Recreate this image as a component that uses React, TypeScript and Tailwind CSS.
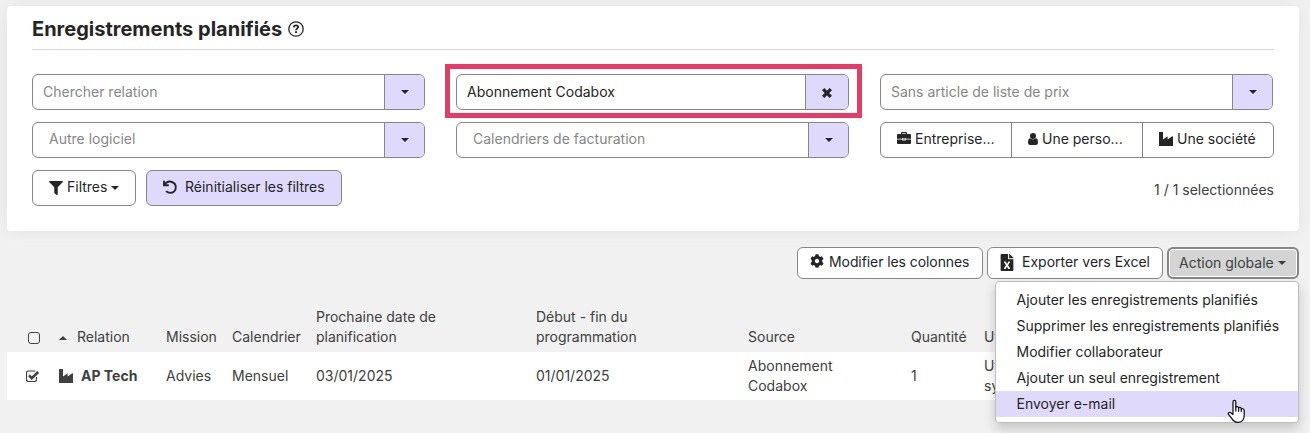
import type { ReactNode } from "react";
import { FaFilter, FaCog, FaFileExcel } from "react-icons/fa";

function Caret({ className = "" }: { className?: string }) {
  return (
    <svg viewBox="0 0 8 4" className={`w-2 h-1 fill-current ${className}`}>
      <path d="M0 0H8L4 4Z" />
    </svg>
  );
}

function Factory({ className = "" }: { className?: string }) {
  return (
    <svg viewBox="0 0 14 14" className={`size-3.5 shrink-0 fill-current ${className}`}>
      <path d="M0 0H4V7.6L8.6 4.2V7.6L13.2 4.2L14 4.6V14H0Z" />
    </svg>
  );
}

function Briefcase() {
  return (
    <svg viewBox="0 0 14 12" className="mb-0.5 h-3 w-3.5 shrink-0 fill-current">
      <path
        fillRule="evenodd"
        d="M4 2V1Q4 0 5 0H9Q10 0 10 1V2H13Q14 2 14 3V6.8H8.7V6H5.3V6.8H0V3Q0 2 1 2ZM5.2 2H8.8V1.2H5.2ZM0 7.4H5.3V8.4H8.7V7.4H14V11Q14 12 13 12H1Q0 12 0 11ZM6.2 6.6H7.8V7.6H6.2Z"
      />
    </svg>
  );
}

function Person() {
  return (
    <svg viewBox="0 0 10 12" className="h-3 w-2.5 shrink-0 fill-current">
      <circle cx="5" cy="3" r="3" />
      <path d="M2.1 4.9C3 6.6 7 6.6 7.9 4.9C9.6 5.8 10 7.4 10 9.6C10 11.3 9.2 12 8 12H2C.8 12 0 11.3 0 9.6C0 7.4 .4 5.8 2.1 4.9Z" />
    </svg>
  );
}

function Undo() {
  return (
    <svg viewBox="0 0 14 14" className="mr-2 size-3.5 shrink-0" fill="none" stroke="currentColor" strokeWidth="1.9">
      <path d="M1 .8V5.2H5.8" />
      <path d="M1.6 4.9C3.2 1.8 6 1.2 8.2 1.7C11 2.4 12.8 4.6 12.8 7.3C12.8 10.6 10.4 12.9 7.3 12.9C5.5 12.9 4.2 12.3 3.1 11.2" />
    </svg>
  );
}

interface ComboProps {
  text: string;
  indent?: boolean;
  filled?: boolean;
  wide?: boolean;
  children?: ReactNode;
}

function Combo({ text, indent, filled, wide, children }: ComboProps) {
  return (
    <div className="flex h-9 w-[393px] overflow-hidden rounded-md border border-[#868686] bg-white">
      <div
        className={`flex flex-1 items-center ${indent ? "pl-4 pb-0.5" : "pl-2.5"} ${filled ? "text-[#252525]" : "text-[#868686]"}`}
      >
        {text}
      </div>
      <div
        className={`flex items-center justify-center border-l border-[#868686] bg-[#dfd9fc] text-[#252525] ${wide ? "w-[43px]" : "w-10"}`}
      >
        {children ?? <Caret />}
      </div>
    </div>
  );
}

const menu = [
  "Ajouter les enregistrements planifiés",
  "Supprimer les enregistrements planifiés",
  "Modifier collaborateur",
  "Ajouter un seul enregistrement",
  "Envoyer e-mail",
];

const cols = "grid grid-cols-[50px_109px_66px_84px_220px_212px_163px_73px_1fr]";

export default function App() {
  return (
    <div className="h-[433px] w-[1310px] overflow-hidden bg-[#f1f1f1] px-[7px] pt-1.5 font-['Inter',sans-serif] text-[14px] leading-5 text-[#404040]">
      <section className="h-[225px] w-[1292px] rounded bg-white px-[25px] shadow-[0_0_20px_rgba(0,0,0,0.06)]">
        <header className="flex h-11 items-center gap-[5px] border-b border-[#d4d4d4] text-[#252525]">
          <h1 className="w-[251px] whitespace-nowrap pt-0.5 text-[20px] font-bold">Enregistrements planifiés</h1>
          <svg viewBox="0 0 16 16" className="mt-0.5 size-4" fill="none" stroke="currentColor">
            <circle cx="8" cy="8" r="7.2" strokeWidth="1.3" />
            <path d="M5.8 6.4C5.9 4.9 6.9 4.4 8 4.4C9.3 4.4 10.2 5.1 10.2 6.1C10.2 7.5 8 7.5 8 9.2" strokeWidth="1.8" />
            <path d="M8 10.2V12" strokeWidth="1.9" />
          </svg>
        </header>
        <div className="mt-6 grid grid-cols-[424px_424px_394px] gap-y-3">
          <Combo text="Chercher relation" />
          <div className="-mx-[11px] -my-2.5 h-[54px] w-[417px] border-[5px] border-[#e83a66] px-1.5 py-[5px]">
            <Combo text="Abonnement Codabox" filled wide>
              <svg viewBox="0 0 10 10" className="mt-0.5 size-2.5" stroke="currentColor" strokeWidth="3.3">
                <path d="M1.2 1.2L8.8 8.8M8.8 1.2L1.2 8.8" />
              </svg>
            </Combo>
          </div>
          <Combo text="Sans article de liste de prix" />
          <Combo text="Autre logiciel" indent />
          <Combo text="Calendriers de facturation" indent />
          <div className="flex h-9 w-[394px] divide-x divide-[#868686] rounded-md border border-[#868686] text-[#252525]">
            <div className="flex w-[131px] items-center gap-1 pb-0.5 pl-4">
              <Briefcase />
              Entreprise...
            </div>
            <div className="flex w-[131px] items-center gap-1 pb-0.5 pl-4">
              <Person />
              Une perso...
            </div>
            <div className="flex flex-1 items-center gap-1 pb-0.5 pl-4">
              <Factory />
              Une société
            </div>
          </div>
        </div>
        <div className="mt-3 flex h-9 items-start text-[#252525]">
          <button className="flex h-9 w-[104px] items-center rounded-md border border-[#868686] pb-0.5 pl-4">
            <FaFilter className="mr-1 mt-0.5 size-3.5" />
            Filtres
            <Caret className="ml-1 mt-0.5" />
          </button>
          <button className="ml-2.5 flex h-9 w-[196px] items-center rounded-md border border-[#868686] bg-[#dfd9fc] pb-0.5 pl-4">
            <Undo />
            Réinitialiser les filtres
          </button>
          <span className="ml-auto mt-2.5 text-[#404040]">1 / 1 selectionnées</span>
        </div>
      </section>

      <div className="relative mt-4 flex h-8 w-[1292px] justify-end gap-1 text-[#252525]">
        <button className="flex h-8 w-[186px] items-center whitespace-nowrap rounded-md border border-[#868686] bg-white pb-0.5 pl-3 tracking-[-0.08px]">
          <FaCog className="mb-0.5 mr-[5px] size-3.5" />
          Modifier les colonnes
        </button>
        <button className="flex h-8 w-[176px] items-center rounded-md border border-[#868686] bg-white pb-0.5 pl-3">
          <FaFileExcel className="mr-2 h-[17px] w-3.5" />
          Exporter vers Excel
        </button>
        <button className="flex h-8 w-[132px] items-center rounded-md border-2 border-[#868686] bg-[#d4d4d4] pl-2.5 text-[#404040] ring-1 ring-inset ring-white">
          Action globale
          <Caret className="ml-1" />
        </button>
        <div className="absolute left-[988px] top-[34px] z-10 h-[142px] w-[304px] rounded border border-[#bdbdbd] bg-white pt-[5px] shadow-[0_6px_12px_rgba(0,0,0,0.18)]">
          {menu.map((item, i) => (
            <div
              key={item}
              className={`h-[26px] pl-[20.5px] leading-[26px] whitespace-nowrap ${i === 4 ? "bg-[#dfd9fc]" : ""}`}
            >
              {item}
            </div>
          ))}
        </div>
        <svg
          viewBox="0 0 20 24"
          className="absolute left-[1220px] top-[152px] z-20 h-6 w-5"
          fill="white"
          stroke="#151525"
          strokeWidth="1.3"
          strokeLinejoin="round"
          strokeLinecap="round"
        >
          <path d="M6 14.6V3.2C6 .8 8.8 .8 8.8 3.2V8.2C9.4 7.2 11.6 7.3 11.6 8.9C12.3 8 14.3 8.3 14.3 9.9C15.2 9.2 17.2 9.7 17.2 11.5V16.5C17.2 20.5 15 23.3 11.5 23.3H10.5C7.6 23.3 5.9 21.6 4.5 19.2L1.5 15.4C.6 13.8 2.6 12.6 4 13.9L6 15.6" />
          <path d="M8.8 8V12M11.6 8.9V12.3M14.3 9.9V12.6" />
        </svg>
      </div>

      <div className={`${cols} mt-7 h-[45px] w-[1292px] items-end pb-[5px]`}>
        <div className="pl-[21px]">
          <div className="mb-[3px] h-[12px] w-3 rounded-[3px] border border-[#404040]" />
        </div>
        <div className="flex items-center pl-0.5">
          <Caret className="mr-2.5 mt-0.5 rotate-180" />
          Relation
        </div>
        <div>Mission</div>
        <div>Calendrier</div>
        <div>Prochaine date de<br />planification</div>
        <div>Début - fin du<br />programmation</div>
        <div>Source</div>
        <div>Quantité</div>
        <div>Ut</div>
      </div>
      <div className={`${cols} h-12 w-[1292px] items-center bg-white`}>
        <div className="pl-[18.5px]">
          <svg viewBox="0 0 14 12" className="h-3 w-3.5" fill="none" stroke="currentColor">
            <path d="M10.5 7V9.5Q10.5 11.5 8.5 11.5H2.5Q.5 11.5 .5 9.5V3Q.5 1 2.5 1H9.5" strokeWidth="1.2" />
            <path d="M3 5.3L5.8 8.1L12.2 2" strokeWidth="2.6" />
          </svg>
        </div>
        <div className="flex items-center pl-0.5 font-bold">
          <Factory className="mr-2" />
          AP Tech
        </div>
        <div>Advies</div>
        <div>Mensuel</div>
        <div>03/01/2025</div>
        <div>01/01/2025</div>
        <div>Abonnement<br />Codabox</div>
        <div>1</div>
        <div>Ut<br />sy</div>
      </div>
    </div>
  );
}
